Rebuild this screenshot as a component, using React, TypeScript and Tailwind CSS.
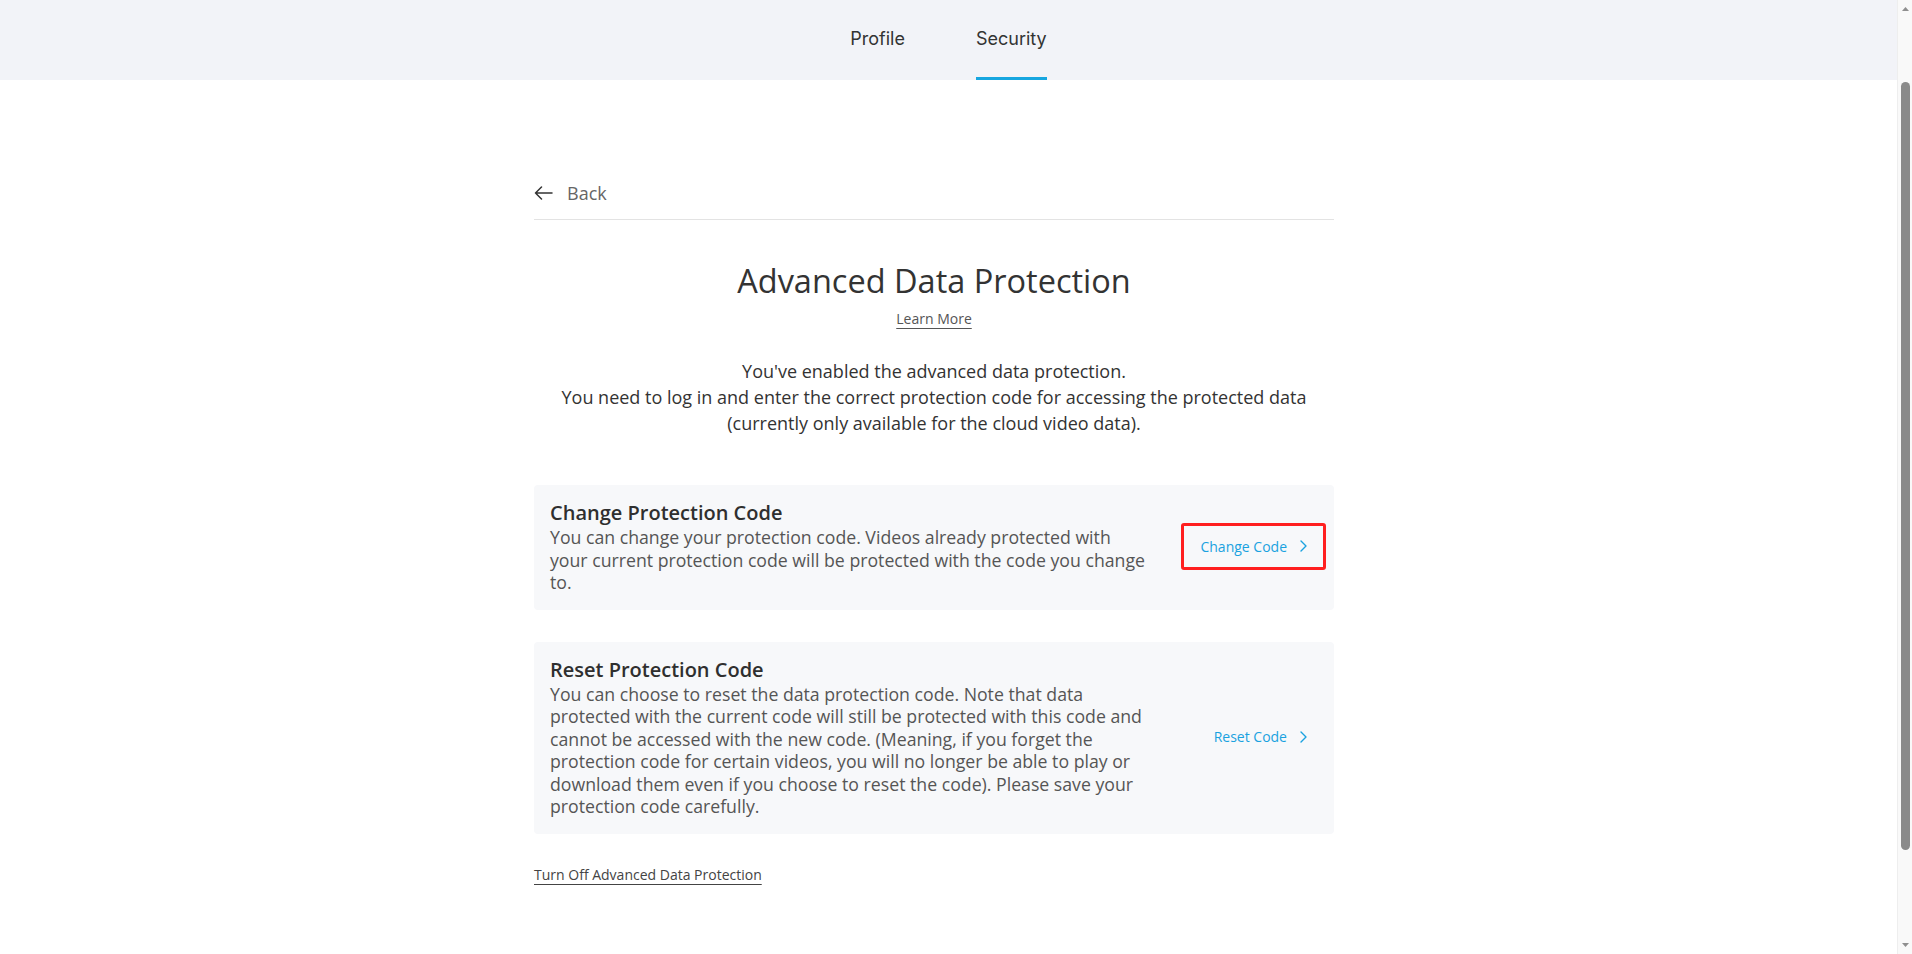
function Chevron() {
  return (
    <svg width="7" height="12" viewBox="0 0 7 12" fill="none" className="shrink-0">
      <path d="M1 1l5 5-5 5" stroke="currentColor" strokeWidth="1.4" strokeLinecap="round" strokeLinejoin="round" />
    </svg>
  );
}

function BackArrow() {
  return (
    <svg width="19" height="14" viewBox="0 0 19 14" fill="none" className="shrink-0">
      <path d="M18 7H1.5M7.5 1L1.5 7l6 6" stroke="#333" strokeWidth="1.5" strokeLinecap="round" strokeLinejoin="round" />
    </svg>
  );
}

function Scrollbar() {
  return (
    <div className="w-[15px] shrink-0 flex flex-col items-center bg-[#f9f9f9] border-l border-[#eeeeee]">
      <svg width="15" height="17" viewBox="0 0 15 17" className="shrink-0">
        <path d="M7.5 7L11 11H4z" fill="#8f8f8f" />
      </svg>
      <div className="mt-[65px] w-[9px] h-[768px] rounded-full bg-[#8a8a8a]" />
      <div className="flex-1" />
      <svg width="15" height="17" viewBox="0 0 15 17" className="shrink-0">
        <path d="M4 6h7l-3.5 4z" fill="#8f8f8f" />
      </svg>
    </div>
  );
}

interface OptionCardProps {
  title: string;
  text: string;
  action: string;
  highlighted?: boolean;
}

function OptionCard({ title, text, action, highlighted }: OptionCardProps) {
  return (
    <div className="flex items-center bg-[#f7f8fa] rounded-[4px] pt-[14px] pb-[16px] pl-4 pr-2">
      <div className="flex-1 pr-[33px]">
        <h3 className="text-[20px] leading-[27px] font-semibold text-[#2f2f2f]">{title}</h3>
        <p className="text-[17.7px] leading-[22.5px] text-[#555]">{text}</p>
      </div>
      <button
        className={`flex items-center gap-[13px] h-[47px] px-4 rounded-[3px] border-[3px] text-[14px] text-[#1aa2e0] ${
          highlighted ? 'border-[#ff1f1f]' : 'border-transparent'
        }`}
      >
        <span>{action}</span>
        <Chevron />
      </button>
    </div>
  );
}

export default function App() {
  return (
    <div className="flex h-[954px] overflow-hidden bg-white font-['Open_Sans',sans-serif] text-[#333]">
      <div className="flex-1 min-w-0">
        {/* Tabs */}
        <header className="h-[80px] bg-[#f2f3f8] flex justify-center gap-[71px] font-['Inter',sans-serif] text-[18px] text-[#333]">
          <div className="flex items-center border-b-[3px] border-transparent">Profile</div>
          <div className="flex items-center border-b-[3px] border-[#17a6e0]">Security</div>
        </header>

        <main className="w-[800px] ml-[534px]">
          {/* Back */}
          <div className="mt-[101px] flex items-center gap-[14px] h-[24px] text-[18px] text-[#666]">
            <BackArrow />
            <span>Back</span>
          </div>
          <div className="mt-[14px] border-t border-[#e3e3e3]" />

          {/* Heading */}
          <h1 className="mt-[41px] text-center text-[32.5px] leading-[40px] text-[#333]">Advanced Data Protection</h1>
          <div className="mt-[5px] text-center">
            <a className="text-[14px] leading-[20px] text-[#555] underline underline-offset-[4px] decoration-[#555]">
              Learn More
            </a>
          </div>

          <p className="mt-[28px] text-center text-[18px] leading-[26px] text-[#333]">
            You've enabled the advanced data protection.
            <br />
            You need to log in and enter the correct protection code for accessing the protected data
            <br />
            (currently only available for the cloud video data).
          </p>

          {/* Options */}
          <div className="mt-[49px] flex flex-col gap-[32px]">
            <OptionCard
              title="Change Protection Code"
              text="You can change your protection code. Videos already protected with your current protection code will be protected with the code you change to."
              action="Change Code"
              highlighted
            />
            <OptionCard
              title="Reset Protection Code"
              text="You can choose to reset the data protection code. Note that data protected with the current code will still be protected with this code and cannot be accessed with the new code. (Meaning, if you forget the protection code for certain videos, you will no longer be able to play or download them even if you choose to reset the code). Please save your protection code carefully."
              action="Reset Code"
            />
          </div>

          <a className="inline-block mt-[31px] text-[14px] leading-[20px] text-[#444] underline underline-offset-[4px] decoration-[#444]">
            Turn Off Advanced Data Protection
          </a>
        </main>
      </div>
      <Scrollbar />
    </div>
  );
}
